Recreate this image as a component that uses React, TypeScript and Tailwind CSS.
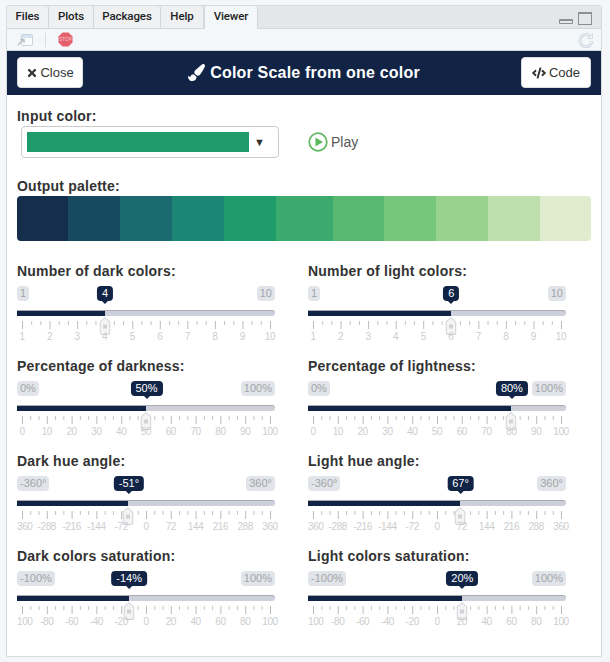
import { FaCode, FaPaintBrush, FaTimes } from "react-icons/fa";

const palette: [string, string][] = [
  ["#142e4b", "w-[51px]"],
  ["#174a5e", "w-[52px]"],
  ["#1b6a71", "w-[52px]"],
  ["#1b8674", "w-[52px]"],
  ["#1f9c6b", "w-[52px]"],
  ["#3baa6c", "w-[57px]"],
  ["#57b871", "w-[51px]"],
  ["#76c77c", "w-[52px]"],
  ["#99d28d", "w-[52px]"],
  ["#bee0ac", "w-[52px]"],
  ["#dfeccd", "w-[51px]"],
];

type SliderProps = {
  label: string;
  min: string;
  max: string;
  value: string;
  ratio: number;
  ticks: string[];
};

const pct = ["0", "10", "20", "30", "40", "50", "60", "70", "80", "90", "100"];
const counts = ["1", "2", "3", "4", "5", "6", "7", "8", "9", "10"];
const hue = ["360", "-288", "-216", "-144", "-72", "0", "72", "144", "216", "288", "360"];
const sat = ["100", "-80", "-60", "-40", "-20", "0", "20", "40", "60", "80", "100"];

const sliders: SliderProps[] = [
  { label: "Number of dark colors:", min: "1", max: "10", value: "4", ratio: 3 / 9, ticks: counts },
  { label: "Number of light colors:", min: "1", max: "10", value: "6", ratio: 5 / 9, ticks: counts },
  { label: "Percentage of darkness:", min: "0%", max: "100%", value: "50%", ratio: 0.5, ticks: pct },
  { label: "Percentage of lightness:", min: "0%", max: "100%", value: "80%", ratio: 0.8, ticks: pct },
  { label: "Dark hue angle:", min: "-360°", max: "360°", value: "-51°", ratio: 309 / 720, ticks: hue },
  { label: "Light hue angle:", min: "-360°", max: "360°", value: "67°", ratio: 427 / 720, ticks: hue },
  { label: "Dark colors saturation:", min: "-100%", max: "100%", value: "-14%", ratio: 0.43, ticks: sat },
  { label: "Light colors saturation:", min: "-100%", max: "100%", value: "20%", ratio: 0.6, ticks: sat },
];

function TickMarks({ count }: { count: number }) {
  const intervals = count - 1;
  const step = 248 / intervals / 3;
  const marks = [];
  for (let i = 0; i <= intervals * 3; i++) {
    const major = i % 3 === 0;
    marks.push(
      <line key={i} x1={5.5 + i * step} x2={5.5 + i * step} y1={0} y2={major ? 8 : 4} stroke={major ? "#bbbbbb" : "#c4c4c4"} strokeWidth={1} />
    );
  }
  return (
    <svg width="258" height="8" className="block">
      {marks}
    </svg>
  );
}

function Slider({ label, min, max, value, ratio, ticks }: SliderProps) {
  const left = 5 + ratio * 248;
  return (
    <div className="h-[95px] w-[258px]">
      <div className="h-[22px] text-[14px] leading-[22px] font-bold tracking-[0.22px] text-[#333333]">{label}</div>
      <div className="relative">
        <div className="mt-[4px] flex justify-between text-[11px] leading-[15px] text-[#a3a5a8]">
          <span className="h-[15px] rounded-[4px] bg-[#e1e4e9] px-[3px]">{min}</span>
          <span className="h-[15px] rounded-[4px] bg-[#e1e4e9] px-[3px]">{max}</span>
        </div>
        {/* bubble */}
        <div className="absolute top-0 -translate-x-1/2" style={{ left: left + 0.5 }}>
          <div className="h-[15px] rounded-[4px] bg-[#112446] px-[5px] text-[11px] leading-[15px] whitespace-nowrap text-white">{value}</div>
          <div className="mx-auto h-0 w-0 border-x-[3px] border-t-[3px] border-x-transparent border-t-[#112446]" />
        </div>
        {/* track */}
        <div className="mt-[9px] h-[6px] overflow-hidden rounded-r-[4px] border-t border-[#a9abb0] bg-[#cdd0da]">
          <div className="-mt-px h-[6px] bg-[#112446]" style={{ width: left }} />
        </div>
        <div className="mt-[5px]">
          <TickMarks count={ticks.length} />
        </div>
        {/* handle */}
        <div className="absolute top-[31px] -translate-x-1/2" style={{ left }}>
          <svg width="11" height="18" viewBox="0 0 11 18" className="block">
            <path d="M5.5.7 10.4 5v10.5a2 2 0 0 1-2 2H2.6a2 2 0 0 1-2-2V5z" fill="#f4f4f5" stroke="#c9cbd0" />
            <path d="M4.5 7.5v4M6.5 7.5v4" stroke="#aeb0b5" />
          </svg>
        </div>
        <div className="relative mt-[1px] h-[14px] text-[10px] leading-[14px] tracking-[-0.4px] text-[#cdcdcd]">
          {ticks.map((t, i) =>
            i === 0 && t.length === 3 ? (
              <span key={i} className="absolute left-0">
                {t}
              </span>
            ) : (
              <span key={i} className="absolute -translate-x-1/2" style={{ left: 5 + (i * 248) / (ticks.length - 1) }}>
                {t}
              </span>
            )
          )}
        </div>
      </div>
    </div>
  );
}

export default function App() {
  return (
    <div className="min-h-[662px] bg-[#f4f6f8] pt-[5px] pl-[6px] font-['Liberation_Sans',Arial,sans-serif]">
      <div className="h-[652px] w-[596px] overflow-hidden rounded-t-[3px] border border-[#d8dbde] bg-white">
        {/* pane tabs */}
        <div className="flex h-[23px] items-end border-b border-[#d3d6da] bg-[#e4e6e8] font-['Roboto',sans-serif] text-[11.5px] font-medium tracking-[-0.1px] text-[#222222]">
          <div className="flex h-[22px] w-[42px] items-center justify-center rounded-t-[3px] border-r border-[#d3d6da] bg-[#eef0f2]">Files</div>
          <div className="flex h-[22px] w-[45px] items-center justify-center rounded-t-[3px] border-r border-[#d3d6da] bg-[#eef0f2]">Plots</div>
          <div className="flex h-[22px] w-[67px] items-center justify-center rounded-t-[3px] border-r border-[#d3d6da] bg-[#eef0f2]">Packages</div>
          <div className="flex h-[22px] w-[43px] items-center justify-center rounded-t-[3px] border-r border-[#d3d6da] bg-[#eef0f2]">Help</div>
          <div className="-mb-px flex h-[24px] w-[54px] items-center justify-center rounded-t-[3px] border-x border-[#d3d6da] bg-[#f4f7f9]">Viewer</div>
          <div className="mb-[2px] ml-auto flex items-end gap-[5px] pr-[9px] pb-[1px]">
            <div className="mb-[1px] h-[5px] w-[14px] rounded-[1px] border border-t-2 border-[#8b9096]" />
            <div className="h-[13px] w-[14px] border border-t-2 border-[#8b9096]" />
          </div>
        </div>
        {/* toolbar */}
        <div className="flex h-[22px] items-center border-b border-[#d3d6da] bg-[#f4f7f9] pr-[7px] pl-[10px]">
          <svg width="16" height="14" viewBox="0 0 16 14">
            <rect x="4.5" y="1.5" width="11" height="11" rx="1.5" fill="#fbfcfd" stroke="#ccd2d8" />
            <rect x="5" y="2" width="10" height="3" fill="#d5e4f2" />
            <path d="M1 12 6 7M3.5 6.5H7V10" fill="none" stroke="#b4b9be" strokeWidth="1.3" />
          </svg>
          <div className="ml-[12px] h-[14px] w-px bg-[#d8dce0]" />
          <svg width="15" height="15" viewBox="0 0 15 15" className="ml-[12px]">
            <path d="M4.5.5h6l4 4v6l-4 4h-6l-4-4v-6z" fill="#e4606d" />
            <text x="7.5" y="9.2" textAnchor="middle" fontSize="4.6" fontFamily="Liberation Sans" fill="#f7c7cc">STOP</text>
          </svg>
          <svg width="16" height="16" viewBox="0 0 16 16" className="ml-auto">
            <path d="M12.8 5A6 6 0 1 0 14 9" fill="none" stroke="#d0d8e3" strokeWidth="3" />
            <path d="M15 1v6H9z" fill="#d0d8e3" />
            <path d="M12.8 5A6 6 0 1 0 14 9" fill="none" stroke="#f4f7f9" strokeWidth="1" />
            <path d="M14.2 3v3h-3z" fill="#f4f7f9" />
          </svg>
        </div>
        {/* title bar */}
        <div className="flex h-[44px] items-center justify-between bg-[#112446] px-[10px] pb-px">
          <button className="flex h-[31px] w-[66px] items-center justify-center gap-[2px] rounded-[4px] border border-[#dddddd] bg-white text-[13px] text-[#333333]">
            <FaTimes className="h-[12px] w-[12px]" />
            Close
          </button>
          <div className="ml-[4px] flex items-center gap-[5px] text-[16px] font-bold tracking-[0.2px] text-white">
            <FaPaintBrush className="h-[17px] w-[17px]" />
            Color Scale from one color
          </div>
          <button className="flex h-[31px] w-[70px] items-center justify-center gap-[3px] rounded-[4px] border border-[#dddddd] bg-white text-[13px] text-[#333333]">
            <FaCode className="h-[14px] w-[14px]" />
            Code
          </button>
        </div>
        {/* inputs */}
        <div className="px-[10px] pt-[11px]">
          <div className="h-[20px] text-[14px] leading-[21px] font-bold tracking-[0.22px] text-[#333333]">Input color:</div>
          <div className="flex h-[32px] items-center">
            <div className="ml-[4px] flex h-[32px] w-[258px] items-center rounded-[4px] border border-[#cccccc] pl-[5px]">
              <div className="h-[20px] w-[222px] bg-[#1f9c6b]" />
              <span className="ml-[5px] text-[11px] text-[#333333]">▼</span>
            </div>
            <div className="ml-[29px] flex items-center gap-[3px] text-[14px] text-[#555555]">
              <svg width="20" height="20" viewBox="0 0 20 20">
                <circle cx="10" cy="10" r="8.8" fill="none" stroke="#5cb85c" strokeWidth="1.7" />
                <path d="M7.5 5.5 15 10l-7.5 4.5z" fill="#5cb85c" />
              </svg>
              Play
            </div>
          </div>
          <div className="mt-[18px] h-[20px] text-[14px] leading-[21px] font-bold tracking-[0.22px] text-[#333333]">Output palette:</div>
          <div className="flex h-[45px] w-[574px] overflow-hidden rounded-[4px]">
            {palette.map(([color, width]) => (
              <div key={color} className={width} style={{ backgroundColor: color }} />
            ))}
          </div>
          <div className="mt-[19px] grid grid-cols-[258px_258px] gap-x-[33px]">
            {sliders.map((s) => (
              <Slider key={s.label} {...s} />
            ))}
          </div>
        </div>
      </div>
    </div>
  );
}
